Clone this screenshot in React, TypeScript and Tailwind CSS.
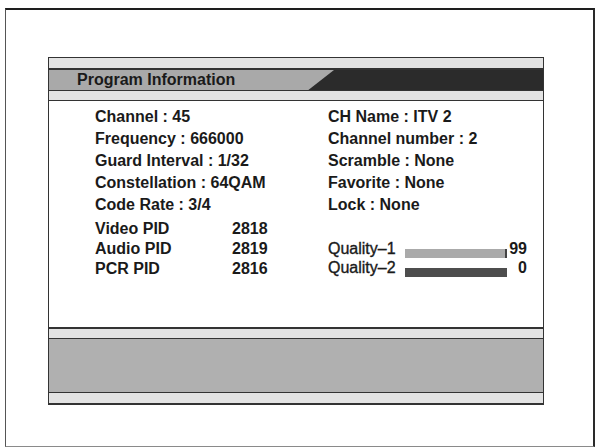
const font = { fontFamily: '"Liberation Sans", Arial, sans-serif' };

const leftRows = [
  "Channel : 45",
  "Frequency : 666000",
  "Guard Interval : 1/32",
  "Constellation : 64QAM",
  "Code Rate : 3/4",
];

const rightRows = [
  "CH Name : ITV 2",
  "Channel number : 2",
  "Scramble : None",
  "Favorite : None",
  "Lock : None",
];

const Strip = () => <div className="h-[9px] bg-[#e3e3e3]" />;
const Rule = ({ className = "" }: { className?: string }) => (
  <div className={`h-[1px] bg-[#333333] ${className}`} />
);

const QualityRow = ({
  label,
  value,
  bar,
}: {
  label: string;
  value: string;
  bar: string;
}) => (
  <div className="flex h-[18px] items-center">
    <span className="w-[77px] font-normal text-[16px] [-webkit-text-stroke:0.35px_#1a1a1a]">
      {label}
    </span>
    <div className="flex h-full w-[102px] items-end">
      <div className={`h-[9px] w-full ${bar}`} />
    </div>
    <span className="w-[20px] text-right">{value}</span>
  </div>
);

export default function App() {
  return (
    <div className="w-[596px] h-[448px] bg-white pt-[8px] pl-[5px]" style={font}>
      <div className="w-[590px] h-[439px] border-t-2 border-r-2 border-l border-b border-t-[#1e1e1e] border-r-[#2a2a2a] border-l-[#555555] border-b-[#8a8a8a] pt-[47px] pl-[42px]">
        {/* program information panel */}
        <div className="w-[496px] border-x border-t border-b-2 border-[#333333] text-[#1a1a1a]">
          <div className="h-[10px] bg-[#e3e3e3]" />
          <Rule className="h-[2px]" />
          <div className="relative h-[20px] bg-[#2b2b2b]">
            <div className="absolute inset-y-0 left-0 w-[285px] bg-[#a9a9a9] [clip-path:polygon(0_0,100%_0,91%_100%,0_100%)]" />
            <div className="relative pl-[28px] text-[16px] font-bold leading-[20px]">
              Program Information
            </div>
          </div>
          <Rule />
          <Strip />
          <Rule />

          {/* info body */}
          <div className="h-[226px] flex pl-[46px] pt-[5px] text-[16px] font-bold">
            <div className="w-[233px]">
              {leftRows.map((r) => (
                <div key={r} className="h-[22px] leading-[22px]">
                  {r}
                </div>
              ))}
              <div className="mt-[1px] grid h-[20px] grid-cols-[137px_auto] items-center">
                <span>Video PID</span>
                <span>2818</span>
              </div>
              <div className="grid h-[18px] grid-cols-[137px_auto] items-center">
                <span>Audio PID</span>
                <span>2819</span>
              </div>
              <div className="mt-[2px] grid h-[22px] grid-cols-[137px_auto] items-center">
                <span>PCR PID</span>
                <span>2816</span>
              </div>
            </div>
            <div>
              {rightRows.map((r) => (
                <div key={r} className="h-[22px] leading-[22px]">
                  {r}
                </div>
              ))}
              <div className="mt-[24px]">
                <QualityRow
                  label="Quality–1"
                  value="99"
                  bar="bg-[#aaaaaa] border-r-2 border-[#444444]"
                />
                <div className="mt-[1px]">
                  <QualityRow label="Quality–2" value="0" bar="bg-[#4d4d4d]" />
                </div>
              </div>
            </div>
          </div>

          <Rule className="h-[2px]" />
          <Strip />
          <Rule />
          <div className="h-[53px] bg-[#b0b0b0]" />
          <Rule />
          <div className="h-[10px] bg-[#e3e3e3]" />
        </div>
      </div>
    </div>
  );
}
